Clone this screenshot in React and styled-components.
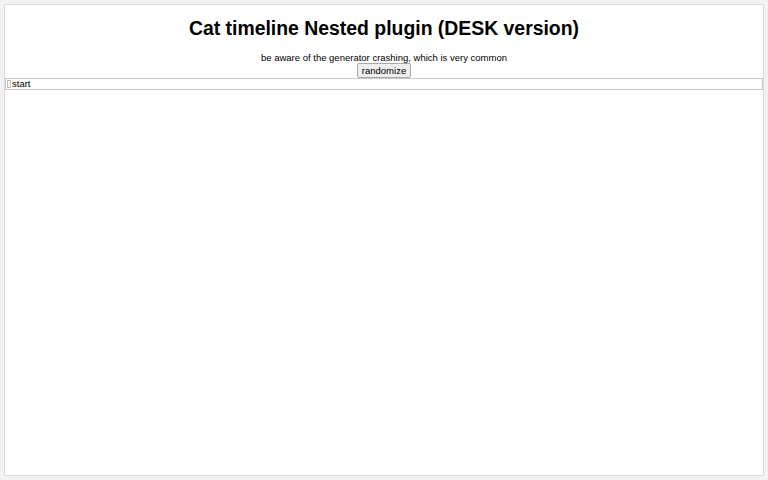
import React from 'react'
import styled, { createGlobalStyle } from 'styled-components'

const Global = createGlobalStyle`
  html, body {
    margin: 0;
    padding: 0;
    background: #f2f2f2;
    font-family: "Liberation Sans", Arial, sans-serif;
  }
`

// the white sheet that holds everything
const Sheet = styled.div`
  box-sizing: border-box;
  margin: 4px;
  height: 472px;
  background: #fff;
  border: 1px solid #dcdcdc;
  display: flex;
  flex-direction: column;
  align-items: center;
`

const Title = styled.h1`
  margin: 13px 0 0;
  font-size: 19.4px;
  line-height: 20px;
  font-weight: bold;
  color: #000;
`

const Note = styled.p`
  margin: 14px 0 0;
  font-size: 9.5px;
  line-height: 11px;
  color: #000;
`

const Button = styled.button`
  margin: 0;
  padding: 0 4px;
  height: 15px;
  font-family: inherit;
  font-size: 9.5px;
  line-height: 12px;
  color: #000;
  background: #efefef;
  border: 1px solid #a9a9a9;
  border-radius: 2px;
`

// one row of the timeline
const Row = styled.div`
  box-sizing: border-box;
  align-self: stretch;
  height: 12px;
  border: 1px solid #c8c8c8;
  display: flex;
  align-items: center;
  padding-left: 1px;
  font-size: 9.5px;
  line-height: 10px;
  color: #000;
`

const Toggle = styled.span`
  display: inline-block;
  width: 2px;
  height: 6px;
  border: 1px solid #c4c4c4;
  margin-right: 1px;
`

export default function App() {
  return (
    <>
      <Global />
      <Sheet>
        <Title>Cat timeline Nested plugin (DESK version)</Title>
        <Note>be aware of the generator crashing, which is very common</Note>
        <Button>randomize</Button>
        <Row>
          <Toggle />
          start
        </Row>
      </Sheet>
    </>
  )
}
